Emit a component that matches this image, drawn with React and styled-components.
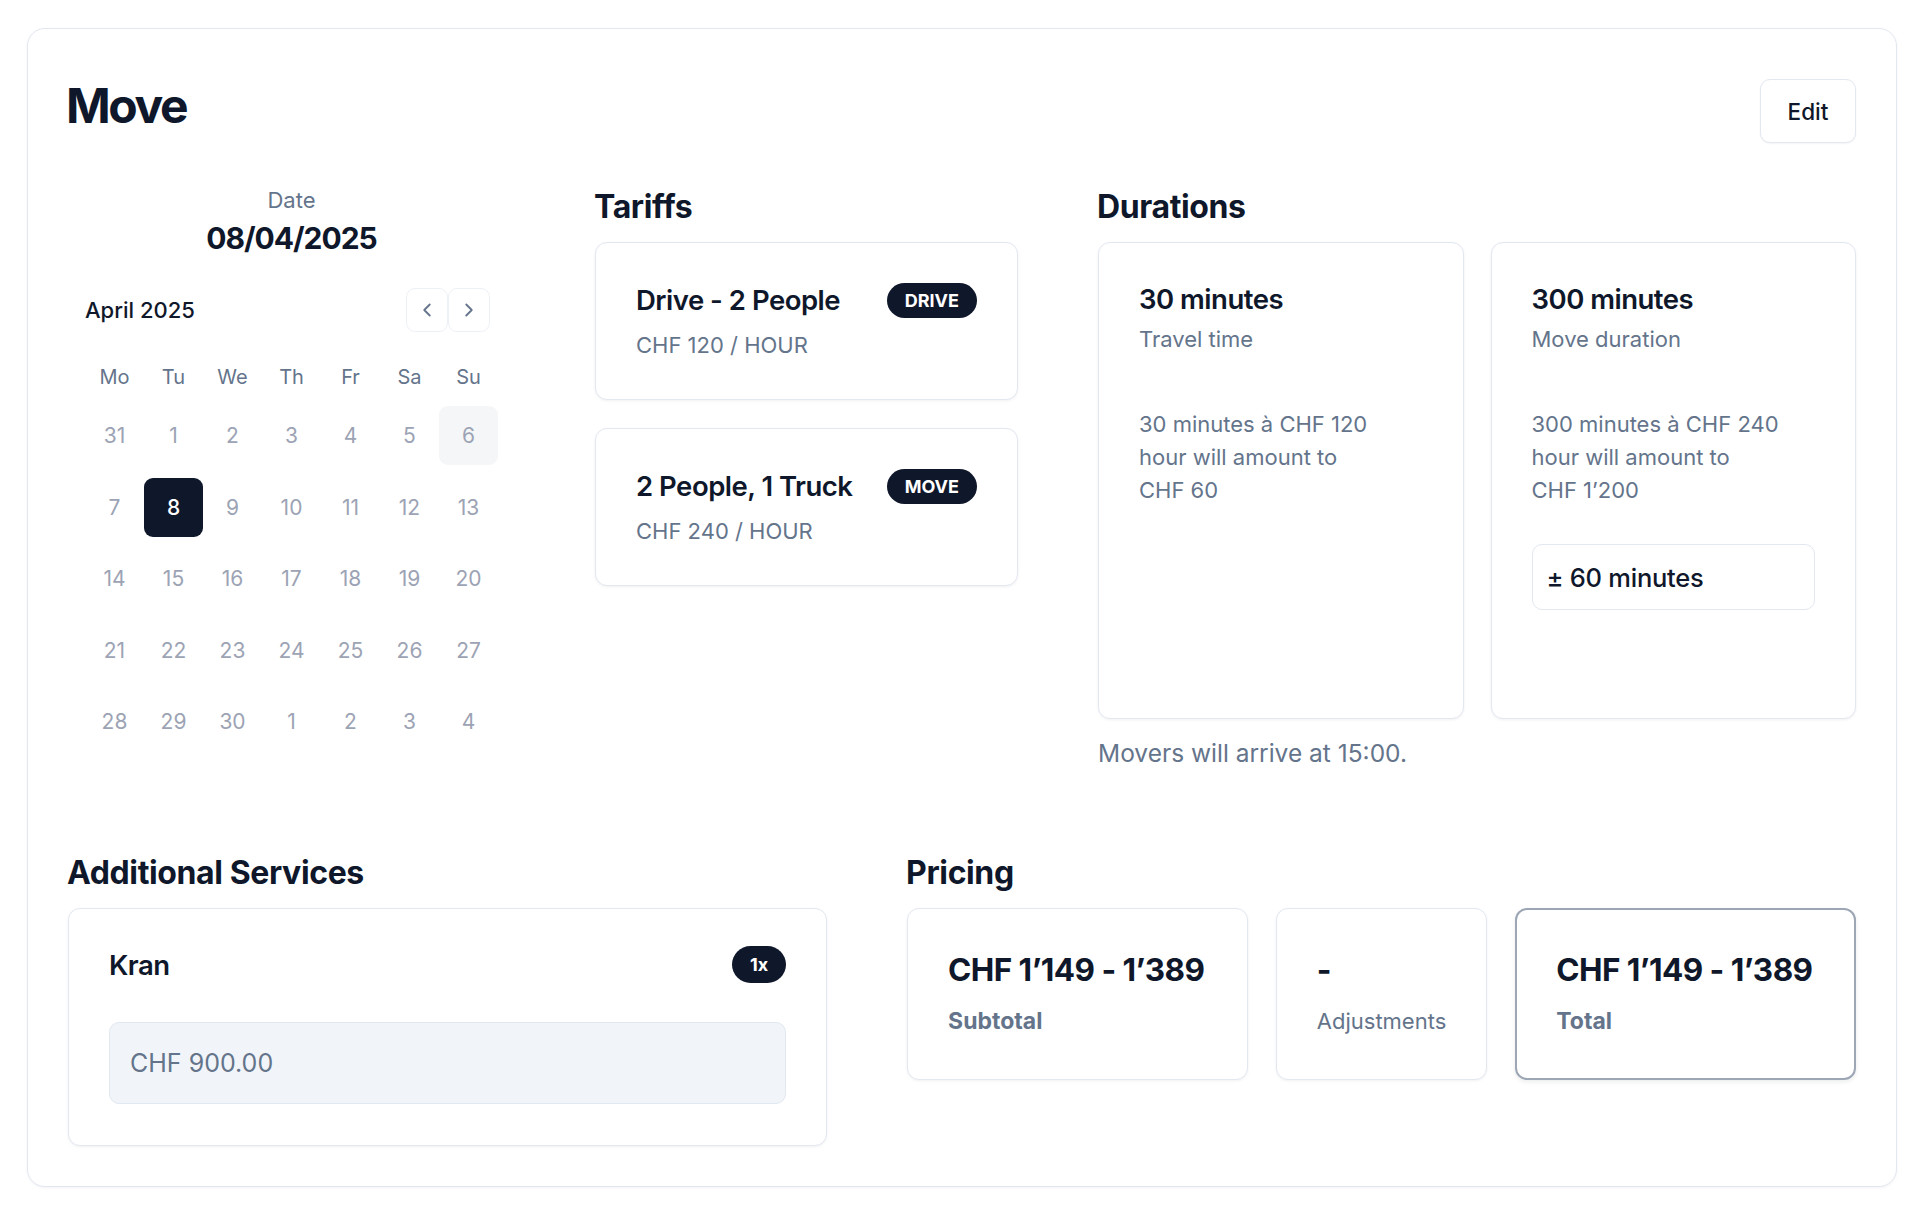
import React from 'react';
import styled, { createGlobalStyle, css } from 'styled-components';
import { ChevronLeft, ChevronRight } from 'lucide-react';

const GlobalStyle = createGlobalStyle`
  * {
    box-sizing: border-box;
  }

  body {
    margin: 0;
    background: #ffffff;
    color: #0f172a;
    font-family: Inter, 'Noto Sans', 'Liberation Sans', sans-serif;
    -webkit-font-smoothing: antialiased;
  }
`;

const Page = styled.div`
  padding: 28px 23px 30px 27px;
`;

const Panel = styled.section`
  border: 1px solid #e2e8f0;
  border-radius: 18px;
  background: #ffffff;
  box-shadow: 0 1px 3px rgba(15, 23, 42, 0.05);
  padding: 50px 40px 40px;
`;

const Header = styled.header`
  display: flex;
  justify-content: space-between;
  align-items: flex-start;
  height: 64px;
`;

const Title = styled.h1`
  margin: 3px 0 0 -2px;
  font-size: 48px;
  line-height: 48px;
  font-weight: 700;
  letter-spacing: -0.05em;
`;

const EditButton = styled.button`
  width: 96px;
  height: 64px;
  border: 1px solid #e2e8f0;
  border-radius: 10px;
  background: #ffffff;
  box-shadow: 0 1px 2px rgba(15, 23, 42, 0.05);
  font-family: inherit;
  font-size: 22.5px;
  font-weight: 500;
  color: #0f172a;
`;

const TopGrid = styled.div`
  display: grid;
  grid-template-columns: 447px 423px 1fr;
  column-gap: 80px;
  align-items: start;
  margin-top: 46px;
`;

const BottomGrid = styled.div`
  display: grid;
  grid-template-columns: 4fr 5fr;
  column-gap: 80px;
  align-items: start;
  margin-top: 85px;
`;

const Column = styled.div`
  display: flex;
  flex-direction: column;
  align-items: ${(p) => (p.$center ? 'center' : 'stretch')};
  min-width: 0;
`;

const SectionTitle = styled.h2`
  margin: 0 0 17px -1px;
  font-size: 32px;
  line-height: 36px;
  font-weight: 700;
  letter-spacing: -0.012em;
`;

/* date + calendar */

const DateLabel = styled.div`
  font-size: 22px;
  line-height: 22px;
  color: #64748b;
`;

const DateValue = styled.div`
  margin-top: 9px;
  font-size: 30px;
  line-height: 36px;
  font-weight: 700;
  letter-spacing: -0.035em;
`;

const Calendar = styled.div`
  width: 413px;
  margin-top: 32px;
`;

const Caption = styled.div`
  display: flex;
  justify-content: space-between;
  align-items: center;
  height: 44px;
  padding-right: 8px;
`;

const MonthLabel = styled.div`
  font-size: 22px;
  font-weight: 500;
`;

const NavGroup = styled.div`
  display: flex;
`;

const NavButton = styled.button`
  display: flex;
  align-items: center;
  justify-content: center;
  width: 42px;
  height: 44px;
  padding: 0;
  border: 1px solid #edf1f6;
  border-radius: 9px;
  background: transparent;
  color: #64748b;
`;

const WeekRow = styled.div`
  display: grid;
  grid-template-columns: repeat(7, 59px);
  margin-top: ${(p) => (p.$head ? '15px' : '0')};
`;

const Weeks = styled.div`
  display: flex;
  flex-direction: column;
  gap: 12.5px;
`;

const Weekday = styled.div`
  display: flex;
  align-items: center;
  justify-content: center;
  height: 59px;
  font-size: 20px;
  color: #64748b;
`;

const Day = styled.div`
  display: flex;
  align-items: center;
  justify-content: center;
  height: 59px;
  border-radius: 9px;
  font-size: 21px;
  color: #9ca3b4;

  ${(p) =>
    p.$today &&
    css`
      background: #f4f6f8;
    `}

  ${(p) =>
    p.$selected &&
    css`
      background: #0f172a;
      color: #ffffff;
      font-weight: 500;
    `}
`;

/* cards */

const Card = styled.div`
  border: 1px solid #e2e8f0;
  border-radius: 12px;
  background: #ffffff;
  box-shadow: 0 1px 3px rgba(15, 23, 42, 0.06);
`;

const Stack = styled.div`
  display: flex;
  flex-direction: column;
  gap: 28px;
`;

const TariffCard = styled(Card)`
  height: 158px;
  padding: 39px 40px;
`;

const CardHead = styled.div`
  display: flex;
  justify-content: space-between;
  align-items: center;
  min-height: 36px;
`;

const CardTitle = styled.div`
  font-size: 27.5px;
  line-height: 36px;
  font-weight: 600;
  letter-spacing: -0.018em;
`;

const Badge = styled.span`
  display: inline-flex;
  align-items: center;
  height: ${(p) => (p.$tall ? '37px' : '35px')};
  padding: 0 18px;
  border-radius: 999px;
  background: #0f172a;
  color: #ffffff;
  font-size: 18px;
  font-weight: 700;
`;

const Muted = styled.div`
  font-size: ${(p) => p.$fs || '22px'};
  line-height: ${(p) => p.$lh || '30px'};
  color: #64748b;
  margin-top: ${(p) => p.$mt || '0'};
`;

const DurationGrid = styled.div`
  display: grid;
  grid-template-columns: 1fr 1fr;
  column-gap: 27px;
`;

const DurationCard = styled(Card)`
  min-height: 477px;
  padding: 38px 40px;
`;

const Tolerance = styled.div`
  display: flex;
  align-items: center;
  height: 66px;
  margin-top: 37px;
  padding: 0 14px;
  border: 1px solid #e2e8f0;
  border-radius: 10px;
  font-size: 25.5px;
  font-weight: 500;
  letter-spacing: -0.01em;
`;

const ServiceCard = styled(Card)`
  padding: 37px 40px 41px;
`;

const PriceField = styled.div`
  display: flex;
  align-items: center;
  height: 82px;
  margin-top: 39px;
  padding: 0 20px;
  border: 1px solid #e2e8f0;
  border-radius: 10px;
  background: #f1f5f9;
  font-size: 25px;
  color: #64748b;
`;

const PriceRow = styled.div`
  display: flex;
  gap: 28px;
`;

const PriceCard = styled(Card)`
  flex: ${(p) => (p.$grow ? '1 1 0' : '0 0 auto')};
  min-width: 0;
  display: flex;
  flex-direction: column;
  justify-content: center;
  height: 172px;
  padding: 0 ${(p) => (p.$emphasis ? '39px' : '40px')};

  ${(p) =>
    p.$emphasis &&
    css`
      border: 2px solid #9ca6b5;
      box-shadow: 0 2px 4px rgba(15, 23, 42, 0.08);
    `}
`;

const PriceValue = styled.div`
  font-size: 31.5px;
  line-height: 36px;
  font-weight: 700;
  letter-spacing: -0.018em;
  white-space: nowrap;
`;

const PriceLabel = styled.div`
  margin-top: 18px;
  font-size: ${(p) => (p.$strong ? '23px' : '22px')};
  line-height: 30px;
  color: #64748b;
  font-weight: ${(p) => (p.$strong ? 700 : 400)};
`;

const weekdays = ['Mo', 'Tu', 'We', 'Th', 'Fr', 'Sa', 'Su'];
const weeks = [
  [31, 1, 2, 3, 4, 5, 6],
  [7, 8, 9, 10, 11, 12, 13],
  [14, 15, 16, 17, 18, 19, 20],
  [21, 22, 23, 24, 25, 26, 27],
  [28, 29, 30, 1, 2, 3, 4],
];

const tariffs = [
  { name: 'Drive - 2 People', tag: 'DRIVE', rate: 'CHF 120 / HOUR' },
  { name: '2 People, 1 Truck', tag: 'MOVE', rate: 'CHF 240 / HOUR' },
];

function CalendarBlock() {
  return (
    <Calendar>
      <Caption>
        <MonthLabel>April 2025</MonthLabel>
        <NavGroup>
          <NavButton aria-label="Previous month">
            <ChevronLeft size={22} strokeWidth={2} />
          </NavButton>
          <NavButton aria-label="Next month">
            <ChevronRight size={22} strokeWidth={2} />
          </NavButton>
        </NavGroup>
      </Caption>
      <WeekRow $head>
        {weekdays.map((d) => (
          <Weekday key={d}>{d}</Weekday>
        ))}
      </WeekRow>
      <Weeks>
        {weeks.map((week, wi) => (
          <WeekRow key={wi}>
            {week.map((d, di) => (
              <Day
                key={di}
                $selected={wi === 1 && d === 8}
                $today={wi === 0 && d === 6}
              >
                {d}
              </Day>
            ))}
          </WeekRow>
        ))}
      </Weeks>
    </Calendar>
  );
}

export default function App() {
  return (
    <Page>
      <GlobalStyle />
      <Panel>
        <Header>
          <Title>Move</Title>
          <EditButton>Edit</EditButton>
        </Header>

        <TopGrid>
          <Column $center>
            <DateLabel>Date</DateLabel>
            <DateValue>08/04/2025</DateValue>
            <CalendarBlock />
          </Column>

          <Column>
            <SectionTitle>Tariffs</SectionTitle>
            <Stack>
              {tariffs.map((t) => (
                <TariffCard key={t.tag}>
                  <CardHead>
                    <CardTitle>{t.name}</CardTitle>
                    <Badge>{t.tag}</Badge>
                  </CardHead>
                  <Muted $mt="12px">{t.rate}</Muted>
                </TariffCard>
              ))}
            </Stack>
          </Column>

          <Column>
            <SectionTitle>Durations</SectionTitle>
            <DurationGrid>
              <DurationCard>
                <CardTitle>30 minutes</CardTitle>
                <Muted $lh="33px" $mt="6px">Travel time</Muted>
                <Muted $lh="33px" $mt="52px">
                  30 minutes à CHF 120
                  <br />
                  hour will amount to
                  <br />
                  CHF 60
                </Muted>
              </DurationCard>
              <DurationCard>
                <CardTitle>300 minutes</CardTitle>
                <Muted $lh="33px" $mt="6px">Move duration</Muted>
                <Muted $lh="33px" $mt="52px">
                  300 minutes à CHF 240
                  <br />
                  hour will amount to
                  <br />
                  CHF 1’200
                </Muted>
                <Tolerance>± 60 minutes</Tolerance>
              </DurationCard>
            </DurationGrid>
            <Muted $fs="24.5px" $lh="33px" $mt="18px">
              Movers will arrive at 15:00.
            </Muted>
          </Column>
        </TopGrid>

        <BottomGrid>
          <Column>
            <SectionTitle>Additional Services</SectionTitle>
            <ServiceCard>
              <CardHead>
                <CardTitle>Kran</CardTitle>
                <Badge $tall>1x</Badge>
              </CardHead>
              <PriceField>CHF 900.00</PriceField>
            </ServiceCard>
          </Column>

          <Column>
            <SectionTitle>Pricing</SectionTitle>
            <PriceRow>
              <PriceCard $grow>
                <PriceValue>CHF 1’149 - 1’389</PriceValue>
                <PriceLabel $strong>Subtotal</PriceLabel>
              </PriceCard>
              <PriceCard>
                <PriceValue>-</PriceValue>
                <PriceLabel>Adjustments</PriceLabel>
              </PriceCard>
              <PriceCard $grow $emphasis>
                <PriceValue>CHF 1’149 - 1’389</PriceValue>
                <PriceLabel $strong>Total</PriceLabel>
              </PriceCard>
            </PriceRow>
          </Column>
        </BottomGrid>
      </Panel>
    </Page>
  );
}
